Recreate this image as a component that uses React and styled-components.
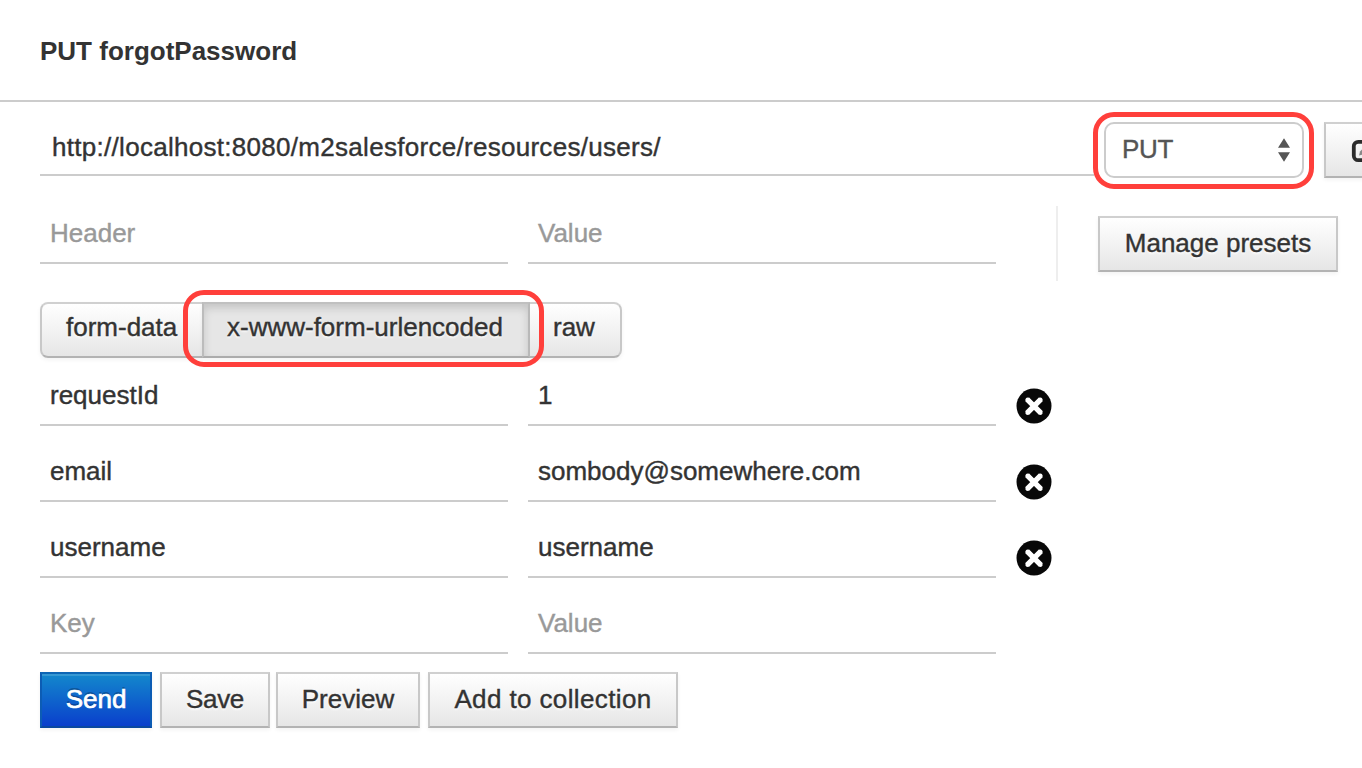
import React from "react";
import styled, { createGlobalStyle, css } from "styled-components";

const Global = createGlobalStyle`
  *, *::before, *::after { box-sizing: border-box; }
  html, body { margin: 0; height: 768px; overflow: hidden; background: #fff; }
  body {
    font-family: "Liberation Sans", Arial, sans-serif;
    font-size: 26px;
    line-height: 36px;
    color: #333;
    -webkit-font-smoothing: antialiased;
  }
`;

const Page = styled.div`
  width: 1362px;
  height: 768px;
  overflow: hidden;
`;

const Header = styled.header`
  height: 102px;
  padding: 33px 40px 0;
  border-bottom: 2px solid #ccc;
`;

const Title = styled.h1`
  margin: 0;
  font-size: 26px;
  line-height: 36px;
  font-weight: 700;
`;

const Label = styled.span`
  white-space: nowrap;
  letter-spacing: ${(p) => p.$track || 0}px;
  -webkit-text-stroke: ${(p) => p.$stroke || 0.4}px currentColor;
`;

const UrlBar = styled.div`
  display: flex;
  align-items: flex-start;
  height: 104px;
  padding: 10px 0 0 40px;
`;

const UrlField = styled.div`
  flex: none;
  width: 1054px;
  height: 64px;
  padding: 17px 12px 0;
  border-bottom: 2px solid #ccc;
`;

const ringed = css`
  &::after {
    content: "";
    position: absolute;
    inset: ${(p) => p.$ring};
    border: 5px solid #ff3f3b;
    border-radius: 21px;
    pointer-events: none;
    z-index: 2;
  }
`;

const Select = styled.div`
  position: relative;
  flex: none;
  display: flex;
  justify-content: space-between;
  width: 200px;
  height: 56px;
  margin: 10px 20px 0 10px;
  padding: 7px 10px 0 16px;
  border: 2px solid #ccc;
  border-radius: 10px;
  color: #555;
  ${ringed}
`;

const Arrows = styled.svg`
  width: 14px;
  height: 26px;
  margin-top: 7px;
`;

const Button = styled.div`
  position: relative;
  flex: none;
  width: ${(p) => p.$w}px;
  height: 56px;
  padding: 7px 0 0;
  text-align: center;
  border: 2px solid;
  border-color: #d0d0d0 #c8c8c8 #b3b3b3;
  background: linear-gradient(#fff, #e6e6e6);
  box-shadow: inset 0 2px 0 rgba(255, 255, 255, 0.2), 0 2px 4px rgba(0, 0, 0, 0.05);
  text-shadow: 0 2px 2px rgba(255, 255, 255, 0.75);
  ${(p) =>
    p.$primary &&
    css`
      color: #fff;
      border-color: #0d66b5 #0c5cb4 #0a48a0;
      background: linear-gradient(#1388cc, #0a3fcc);
      box-shadow: inset 0 2px 0 rgba(255, 255, 255, 0.15), 0 2px 4px rgba(0, 0, 0, 0.05);
      text-shadow: 0 -2px 0 rgba(0, 0, 0, 0.25);
    `}
`;

const ClippedButton = styled(Button)`
  margin-top: 10px;
  padding: 15px 0 0 25px;
  text-align: left;
`;

const Pencil = styled.svg`
  display: block;
  width: 26px;
  height: 24px;
`;

const Headers = styled.div`
  display: flex;
  height: 96px;
  padding-left: 40px;
`;

const Fields = styled.div`
  display: flex;
  gap: 20px;
`;

const Field = styled.div`
  width: 468px;
  height: 58px;
  padding: 9px 10px 0;
  border-bottom: 2px solid #ccc;
  color: ${(p) => (p.$hint ? "#999" : "#333")};
`;

const Divider = styled.div`
  width: 2px;
  height: 75px;
  margin: 0 40px 0 60px;
  background: #eee;
`;

const Presets = styled.div`
  padding-top: 10px;
`;

const Tabs = styled.div`
  display: flex;
  height: 66px;
  padding-left: 40px;
`;

const Tab = styled(Button)`
  padding: 5px 0 0 ${(p) => p.$pad || 0}px;
  text-align: left;
  &:first-child { border-right: 0; border-radius: 8px 0 0 8px; }
  &:last-child { border-left: 0; border-radius: 0 8px 8px 0; }
  ${(p) =>
    p.$active &&
    css`
      background: #e6e6e6;
      border-color: #c0c0c0 #bcbcbc #acacac;
      box-shadow: inset 0 4px 8px rgba(0, 0, 0, 0.15), 0 2px 4px rgba(0, 0, 0, 0.05);
    `}
  ${(p) => p.$ring && ringed}
`;

const Row = styled.div`
  display: flex;
  height: 76px;
  padding-left: 40px;
`;

const Remove = styled.svg`
  width: 36px;
  height: 36px;
  margin: 20px 0 0 20px;
`;

const Actions = styled.div`
  display: flex;
  padding-left: 40px;
`;

const Gap = styled.div`
  width: ${(p) => p.$w}px;
`;

const rows = [
  ["requestId", "1"],
  ["email", "sombody@somewhere.com"],
  ["username", "username"],
];

const RemoveIcon = () => (
  <Remove viewBox="0 0 36 36">
    <circle cx="18" cy="18" r="17.5" fill="#080808" />
    <path d="M11 11.2 25 25.2M25 11.2 11 25.2" stroke="#fff" strokeWidth="5.4" />
    <path d="M11.4 11.6 24.6 24.8M24.6 11.6 11.4 24.8" stroke="#fff" strokeWidth="4" strokeLinecap="round" />
  </Remove>
);

export default function App() {
  return (
    <Page>
      <Global />
      <Header>
        <Title>PUT forgotPassword</Title>
      </Header>
      <UrlBar>
        <UrlField><Label $track={0.29}>http://localhost:8080/m2salesforce/resources/users/</Label></UrlField>
        <Select $ring="-12px -12px -13px -13px">
          <Label $track={-0.3}>PUT</Label>
          <Arrows viewBox="0 0 14 26">
            <path d="M6 0.2 12 9.8H0ZM6 23.8 0 14.2H12Z" fill="#555" />
          </Arrows>
        </Select>
        <ClippedButton $w={70}>
          <Pencil viewBox="0 0 26 24" fill="none">
            <rect x="2.8" y="2.8" width="20" height="18.4" rx="4.5" stroke="#2b2b2b" strokeWidth="3.8" />
            <path d="M8 16.5 9 12.5 18 4 21 7 12 15.5Z" fill="#888" />
          </Pencil>
        </ClippedButton>
      </UrlBar>
      <Headers>
        <Fields>
          <Field $hint><Label>Header</Label></Field>
          <Field $hint><Label>Value</Label></Field>
        </Fields>
        <Divider />
        <Presets><Button $w={240}><Label>Manage presets</Label></Button></Presets>
      </Headers>
      <Tabs>
        <Tab $w={162} $pad={24}><Label>form-data</Label></Tab>
        <Tab $w={328} $pad={23} $active $ring="-14px -16px -11px -21px"><Label>x-www-form-urlencoded</Label></Tab>
        <Tab $w={92} $pad={23}><Label>raw</Label></Tab>
      </Tabs>
      {rows.map(([key, value]) => (
        <Row key={key}>
          <Fields>
            <Field><Label>{key}</Label></Field>
            <Field><Label>{value}</Label></Field>
          </Fields>
          <RemoveIcon />
        </Row>
      ))}
      <Row>
        <Fields>
          <Field $hint><Label>Key</Label></Field>
          <Field $hint><Label>Value</Label></Field>
        </Fields>
      </Row>
      <Actions>
        <Button $w={112} $primary><Label $stroke={0.7}>Send</Label></Button>
        <Gap $w={8} />
        <Button $w={110}><Label $track={-0.3}>Save</Label></Button>
        <Gap $w={6} />
        <Button $w={144}><Label>Preview</Label></Button>
        <Gap $w={8} />
        <Button $w={250}><Label $track={0.38}>Add to collection</Label></Button>
      </Actions>
    </Page>
  );
}
